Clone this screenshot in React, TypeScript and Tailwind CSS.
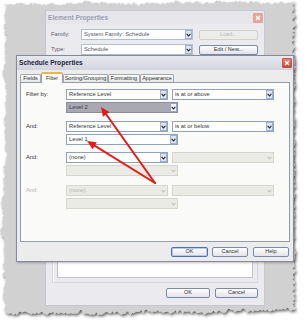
import React from "react";

const font = { fontFamily: '"Liberation Sans", Arial, sans-serif' };

// seeded random so the torn edge stays the same on every render
function rng(seed: number) {
    let a = seed;
    return () => {
        a |= 0; a = (a + 0x6d2b79f5) | 0;
        let t = Math.imul(a ^ (a >>> 15), 1 | a);
        t = (t + Math.imul(t ^ (t >>> 7), 61 | t)) ^ t;
        return ((t ^ (t >>> 14)) >>> 0) / 4294967296;
    };
}

function tornPoints(): string {
    const r = rng(11);
    const pts: string[] = [];
    const x0 = 4, y0 = 4, x1 = 296, y1 = 311;
    // small random walk plus jitter -> rough, paper-like edge
    let w = 0;
    const j = (amp: number) => {
        w = Math.max(-2.5, Math.min(2.5, w + (r() - 0.5) * 1.6));
        return w + (r() - 0.5) * amp;
    };
    for (let x = x0; x < x1; x += 1.8) pts.push(`${x},${y0 + j(3)}`);
    for (let y = y0; y < y1; y += 1.8) pts.push(`${x1 + j(3.5)},${y}`);
    for (let x = x1; x > x0; x -= 1.8) pts.push(`${x},${y1 + j(3.5)}`);
    for (let y = y1; y > y0; y -= 1.8) pts.push(`${x0 + j(3)},${y}`);
    return pts.join(" ");
}

function Paper() {
    return (
        <svg className="absolute inset-0" width={305} height={320}>
            <defs>
                <filter id="torn-shadow" x="-5%" y="-5%" width="110%" height="110%">
                    <feDropShadow dx="1.2" dy="1.8" stdDeviation="1.4" floodColor="#000" floodOpacity="0.65" />
                </filter>
            </defs>
            <polygon points={tornPoints()} fill="#d1d1d1" filter="url(#torn-shadow)" />
        </svg>
    );
}

function Chevron({ color = "#2a2a2a" }: { color?: string }) {
    return (
        <svg width="5" height="4" viewBox="0 0 5 4">
            <path d="M0.6 0.8 L2.5 2.9 L4.4 0.8" fill="none" stroke={color} strokeWidth="1.1" />
        </svg>
    );
}

type ComboKind = "normal" | "selected" | "disabled" | "faded";

function Combo({ w, text = "", kind = "normal" }: { w: number; text?: string; kind?: ComboKind }) {
    const box =
        kind === "selected" ? "border-[#8d8d99] bg-[#a9a9b4] text-[#3c3c44]"
        : kind === "disabled" ? "border-[#d6d6ce] bg-[#ebebe6] text-[#b4b4b4]"
        : kind === "faded" ? "border-[#b2bfd0] bg-white text-[#55556a]"
        : "border-[#8ea3bf] bg-white text-[#333]";
    return (
        <div className={`flex h-[11px] items-center border ${box}`} style={{ width: w }}>
            <span className="flex-1 truncate pl-[2px] text-[5.8px] leading-none">{text}</span>
            {kind === "disabled" ? (
                <div className="flex h-full w-[8px] items-center justify-center">
                    <Chevron color="#c4c4c4" />
                </div>
            ) : (
                <div className={`flex h-[9px] w-[7px] items-center justify-center border mr-[0.5px] ${kind === "selected" ? "border-[#9aa6c2] bg-[#f4f4f8]" : "border-[#a3b0cc] bg-[#dfe4f0]"}`}>
                    <Chevron />
                </div>
            )}
        </div>
    );
}

function XpButton({ w, label, primary, disabled }: { w: number; label: string; primary?: boolean; disabled?: boolean }) {
    const cls = disabled
        ? "border-[#d2d2cc] bg-[#ecece8] text-[#b8b8b8]"
        : primary
            ? "border-[#4f6fb2] bg-gradient-to-b from-white to-[#e2e2ea] text-[#333] shadow-[inset_0_0_0_1px_#b4c8ee]"
            : "border-[#7c88a8] bg-gradient-to-b from-white to-[#e2e2ea] text-[#333]";
    return (
        <div className={`flex h-[10px] items-center justify-center rounded-[2px] border text-[5.5px] leading-none ${cls}`} style={{ width: w }}>
            {label}
        </div>
    );
}

function CloseBox({ faded }: { faded?: boolean }) {
    return (
        <div className={`flex h-[10px] w-[10px] items-center justify-center rounded-[1px] border ${faded ? "border-[#e2a6a0] bg-[#e9a29a]" : "border-[#c2564a] bg-gradient-to-b from-[#e8826f] to-[#cf3f2e]"}`}>
            <svg width="6" height="6" viewBox="0 0 6 6">
                <path d="M1 1 L5 5 M5 1 L1 5" stroke="#fff" strokeWidth="1.4" />
            </svg>
        </div>
    );
}

function ElementProperties() {
    return (
        <div className="absolute left-[45px] top-[10px] flex h-[296px] w-[220px] flex-col border border-[#c6c6ce] bg-[#ebebef]" style={font}>
            <div className="flex h-[13px] items-center justify-between bg-[#e6e6eb] pl-[2px] pr-[1px]">
                <span className="text-[6.6px] font-bold text-[#9d9daf]">Element Properties</span>
                <CloseBox faded />
            </div>
            <div className="flex flex-1 flex-col px-[5px] pt-[5px]">
                <div className="flex items-center">
                    <span className="w-[30px] text-[5.8px] text-[#5c5c6c]">Family:</span>
                    <Combo w={112} text="System Family: Schedule" kind="faded" />
                    <div className="ml-[6px]"><XpButton w={59} label="Load..." disabled /></div>
                </div>
                <div className="mt-[4px] flex items-center">
                    <span className="w-[30px] text-[5.8px] text-[#5c5c6c]">Type:</span>
                    <Combo w={112} text="Schedule" kind="faded" />
                    <div className="ml-[6px]"><XpButton w={59} label="Edit / New..." /></div>
                </div>
                <div className="ml-[1px] mt-[7px] flex h-[221px] w-[206px] flex-col justify-end border border-[#d6d6dc] px-[4px] pb-[4px] shadow-[inset_1px_1px_0_#fff]">
                    <div className="h-[200px] border border-[#c4c4cc] bg-white" />
                </div>
                <div className="mt-[5px] flex justify-end gap-[5px] pr-[1px]">
                    <XpButton w={44} label="OK" />
                    <XpButton w={43} label="Cancel" />
                </div>
            </div>
        </div>
    );
}

const tabs = [
    { label: "Fields", w: 21 },
    { label: "Filter", w: 22, active: true },
    { label: "Sorting/Grouping", w: 45 },
    { label: "Formatting", w: 32 },
    { label: "Appearance", w: 34 },
];

function FilterGroup({ label, a, b, sub, mt, labelMuted }: {
    label: string;
    a: { text?: string; kind?: ComboKind };
    b: { text?: string; kind?: ComboKind };
    sub: { text?: string; kind?: ComboKind };
    mt: number;
    labelMuted?: boolean;
}) {
    return (
        <div className="flex flex-col" style={{ marginTop: mt }}>
            <div className="flex items-center">
                <span className={`w-[40px] text-[5.8px] ${labelMuted ? "text-[#b8b8b8]" : "text-[#333]"}`}>{label}</span>
                <Combo w={102} {...a} />
                <div className="ml-[4px]"><Combo w={102} {...b} /></div>
            </div>
            <div className="ml-[40px] mt-[2px]">
                <Combo w={112} {...sub} />
            </div>
        </div>
    );
}

function ScheduleProperties() {
    return (
        <div className="absolute left-[16px] top-[55px] flex h-[207px] w-[278px] flex-col border border-[#878a9c] bg-[#ececec] shadow-[1px_1px_2px_rgba(0,0,0,0.25)]" style={font}>
            <div className="flex h-[14px] items-center justify-between bg-gradient-to-b from-[#e8e8f0] to-[#d2d3de] pl-[2px] pr-[1px]">
                <span className="text-[6.6px] font-bold text-[#1d2440]">Schedule Properties</span>
                <CloseBox />
            </div>
            <div className="flex flex-col px-[3px]">
                <div className="flex h-[12px] items-end">
                    {tabs.map(t => (
                        <div
                            key={t.label}
                            className={`relative flex items-center justify-center rounded-t-[2px] border border-b-0 text-[5.5px] leading-none text-[#333] ${t.active ? "z-10 -mb-px h-[11px] border-[#9ba0b0] border-t-[#f2b443] border-t-2 bg-[#fbfbfa]" : "h-[8px] border-[#a3a6b4] bg-gradient-to-b from-white to-[#e6e6e2]"}`}
                            style={{ width: t.w }}
                        >
                            {t.label}
                        </div>
                    ))}
                </div>
                <div className="flex h-[160px] w-[270px] flex-col border border-[#959aab] bg-[#fafaf8] pl-[5px] pt-[6px]">
                    <FilterGroup
                        label="Filter by:"
                        mt={0}
                        a={{ text: "Reference Level" }}
                        b={{ text: "is at or above" }}
                        sub={{ text: "Level 2", kind: "selected" }}
                    />
                    <FilterGroup
                        label="And:"
                        mt={8}
                        a={{ text: "Reference Level" }}
                        b={{ text: "is at or below" }}
                        sub={{ text: "Level 1" }}
                    />
                    <FilterGroup
                        label="And:"
                        mt={7}
                        a={{ text: "(none)" }}
                        b={{ kind: "disabled" }}
                        sub={{ kind: "disabled" }}
                    />
                    <FilterGroup
                        label="And:"
                        mt={9}
                        labelMuted
                        a={{ text: "(none)", kind: "disabled" }}
                        b={{ kind: "disabled" }}
                        sub={{ kind: "disabled" }}
                    />
                </div>
                <div className="mt-[5px] flex justify-end pr-[1px]">
                    <XpButton w={37} label="OK" primary />
                    <div className="ml-[4px]"><XpButton w={36} label="Cancel" /></div>
                    <div className="ml-[5px]"><XpButton w={36} label="Help" /></div>
                </div>
            </div>
        </div>
    );
}

function Arrow({ from, to }: { from: [number, number]; to: [number, number] }) {
    const dx = to[0] - from[0], dy = to[1] - from[1];
    const len = Math.hypot(dx, dy);
    const ux = dx / len, uy = dy / len;
    const bx = to[0] - ux * 9, by = to[1] - uy * 9;
    const px = -uy * 4, py = ux * 4;
    return (
        <g>
            <line x1={from[0]} y1={from[1]} x2={bx + ux * 2} y2={by + uy * 2} stroke="#e41b17" strokeWidth="2" strokeLinecap="round" />
            <polygon points={`${to[0]},${to[1]} ${bx + px},${by + py} ${bx - px},${by - py}`} fill="#e41b17" />
        </g>
    );
}

export default function App() {
    return (
        <div className="relative h-[320px] w-[305px] overflow-hidden bg-white">
            <Paper />
            <ElementProperties />
            <ScheduleProperties />
            {/* red callout arrows */}
            <svg className="pointer-events-none absolute inset-0" width={305} height={320}>
                <Arrow from={[155, 183]} to={[101, 107]} />
                <Arrow from={[155, 183]} to={[87, 141]} />
            </svg>
        </div>
    );
}
